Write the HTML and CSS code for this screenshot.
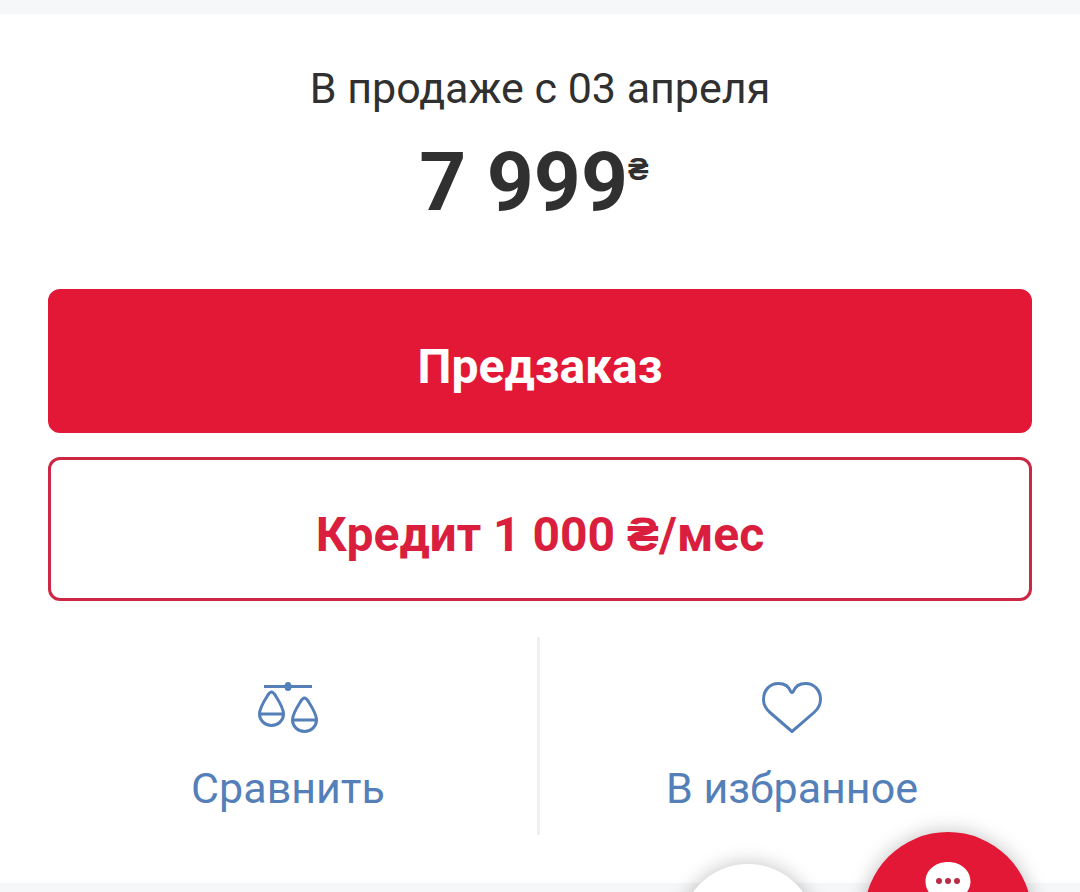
FILE: index.html
```html
<!DOCTYPE html>
<html lang="ru">
<head>
  <meta charset="UTF-8">
  <meta name="viewport" content="width=device-width, initial-scale=1.0">
  <title>Предзаказ</title>
  <link rel="stylesheet" href="styles.css">
</head>
<body>

  <main class="product">
    <p class="release">В продаже с 03 апреля</p>
    <p class="price">7 999<sup class="currency">₴</sup></p>

    <div class="buy">
      <button class="btn btn-primary" type="button">Предзаказ</button>
      <button class="btn btn-outline" type="button">Кредит 1 000 ₴/мес</button>
    </div>

    <div class="actions">
      <button class="action" type="button">
        <svg class="icon" viewBox="0 0 64 56" aria-hidden="true">
          <path d="M8 6.500H56"/>
          <ellipse class="fill" cx="32" cy="6.500" rx="3.500" ry="4.500"/>
          <path d="M15.500 12C13.500 12 12.500 14 11 16.500C7.500 22 3.500 28.500 3.500 34a12 11.500 0 0 0 24 0C27.500 28.500 23.500 22 20 16.500C18.500 14 17.500 12 15.500 12zM4 34H27"/>
          <path d="M48.500 18C46.500 18 45.500 20 44 22.500C40.500 28 36.500 34.500 36.500 40a12 11.500 0 0 0 24 0C60.500 34.500 56.500 28 53 22.500C51.500 20 50.500 18 48.500 18zM37 40H60"/>
        </svg>
        Сравнить
      </button>
      <button class="action" type="button">
        <svg class="icon" viewBox="0 0 64 56" aria-hidden="true">
          <path d="M32 51.500L10 32.500C5.500 28.500 3.500 24 3.500 19.500C3.500 10.500 9.500 3.500 18.500 3.500C25 3.500 29 6.500 31 12Q32 13 33 12C35 6.500 39 3.500 45.500 3.500C54.500 3.500 60.500 10.500 60.500 19.500C60.500 24 58.500 28.500 54 32.500z"/>
        </svg>
        В избранное
      </button>
    </div>
  </main>

  <div class="floating">
    <button class="fab fab-light" type="button" aria-label="Наверх"></button>
    <button class="fab fab-chat" type="button" aria-label="Чат">
      <svg class="chat-icon" viewBox="0 0 46 44" aria-hidden="true">
        <path fill="#fff" d="M23 0C10 0 .5 8.500 .5 19.500S10 39 23 39l10 5v-7c7.500-3 12.500-10 12.500-17.500C45.500 8.500 36 0 23 0z"/>
        <g fill="#b82c46">
          <circle cx="14" cy="19" r="3"/>
          <circle cx="23" cy="19" r="3"/>
          <circle cx="32" cy="19" r="3"/>
        </g>
      </svg>
    </button>
  </div>

</body>
</html>
```

FILE: styles.css
```css
:root {
  --red: #e31836;
  --blue: #557fb8;
  --text: #303030;
  --page: #f6f7f9;
}

* {
  box-sizing: border-box;
}

body {
  margin: 0;
  padding: 14px 0 9px;
  background: var(--page);
  color: var(--text);
  font-family: Roboto, "Liberation Sans", sans-serif;
  font-size: 43px;
  line-height: 48px;
}

button {
  font: inherit;
  cursor: pointer;
}

.product {
  padding: 50px 48px 48px;
  background: #fff;
}

.release {
  margin: 0;
  text-align: center;
}

.price {
  display: flex;
  justify-content: center;
  align-items: flex-start;
  margin: 22px 0 59px;
  padding-right: 12px;
  font-size: 82px;
  font-weight: 700;
  line-height: 96px;
}

.currency {
  padding-top: 12px;
  font-size: 31px;
  line-height: 48px;
}

.buy {
  display: flex;
  flex-direction: column;
  gap: 24px;
}

.btn {
  padding: 48px 24px 36px;
  border: 3px solid var(--red);
  border-radius: 12px;
  font-size: 48px;
  font-weight: 700;
  line-height: 54px;
}

.btn-primary {
  background: var(--red);
  color: #fff;
}

.btn-outline {
  border-color: #cc2745;
  background: #fff;
  color: #d91f3d;
}

.actions {
  display: grid;
  grid-template-columns: 1fr 1fr;
  margin-top: 36px;
}

.action {
  display: flex;
  flex-direction: column;
  align-items: center;
  gap: 28px;
  padding: 43px 9px 23px 0;
  border: 0;
  border-right: 3px solid #f0f0f3;
  background: none;
  color: var(--blue);
}

.action:last-child {
  padding-right: 0;
  padding-left: 12px;
  border-right: 0;
}

.icon {
  width: 64px;
  height: 56px;
  fill: none;
  stroke: var(--blue);
  stroke-width: 3;
  stroke-linejoin: round;
}

.icon .fill {
  fill: var(--blue);
  stroke: none;
}

/* round buttons hang over the bottom edge */
.floating {
  position: fixed;
  right: 48px;
  bottom: -108px;
  display: flex;
  align-items: flex-end;
  gap: 48px;
}

.fab {
  display: flex;
  justify-content: center;
  align-items: flex-start;
  padding: 0;
  border: 0;
  border-radius: 50%;
  box-shadow: 0 0 20px rgba(0, 0, 0, 0.25);
}

.fab-light {
  width: 136px;
  height: 136px;
  background: #fff;
}

.fab-chat {
  width: 168px;
  height: 168px;
  padding-top: 30px;
  background: var(--red);
}

.chat-icon {
  width: 46px;
  height: 44px;
}
```
